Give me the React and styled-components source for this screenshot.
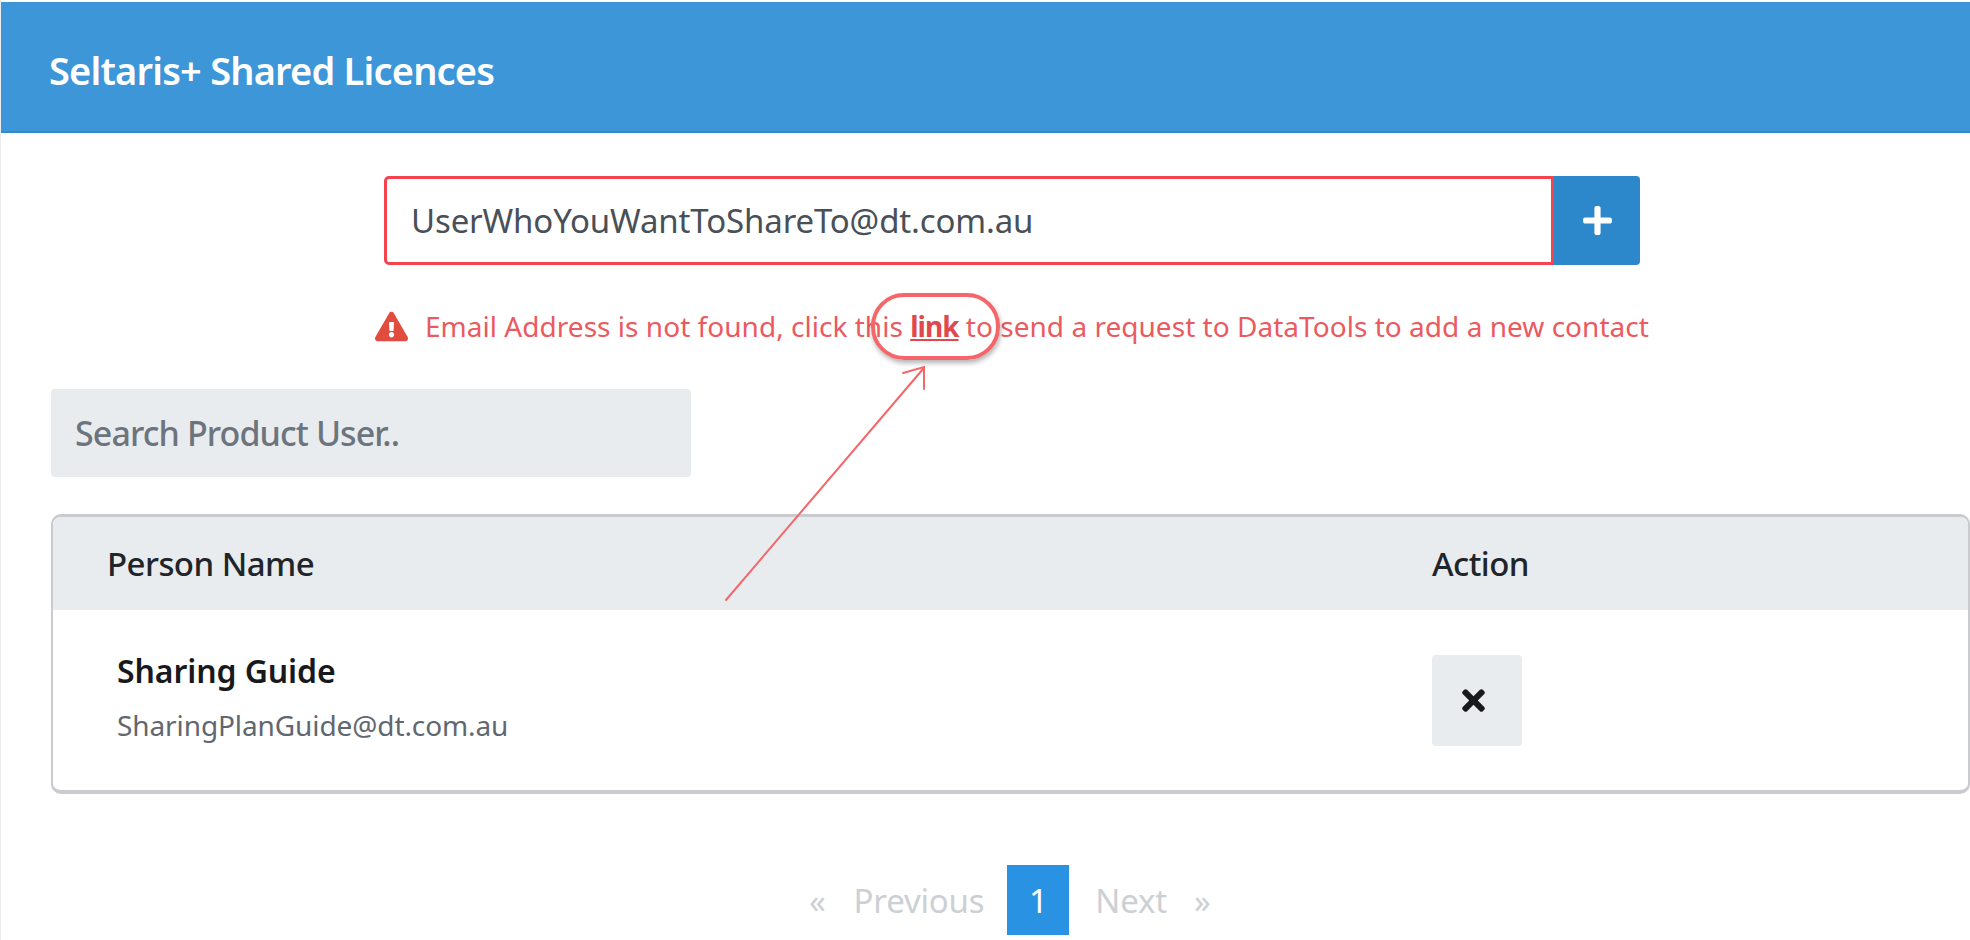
import React from "react";
import styled, { createGlobalStyle } from "styled-components";
import { FaTimes, FaPlus, FaExclamationTriangle } from "react-icons/fa";

const Global = createGlobalStyle`
  html, body { margin: 0; padding: 0; background: #fff; }
  body { font-family: "Noto Sans", "Open Sans", sans-serif; overflow: hidden; }
`;

const Page = styled.div`
  position: relative;
  width: 1970px;
  height: 940px;
  overflow: hidden;
  box-sizing: border-box;
  padding-top: 2px;
  background: #fff;
  border-left: 1px solid #ececec;
`;

const Header = styled.header`
  height: 131px;
  background: #3c96d8;
  border-bottom: 2px solid #2f8bd0;
  box-sizing: border-box;
  display: flex;
  align-items: center;
  padding: 7px 0 0 48px;
`;

const Title = styled.h1`
  margin: 0;
  color: #fff;
  font-size: 38px;
  font-weight: 600;
  letter-spacing: -0.8px;
`;

const InviteRow = styled.div`
  display: flex;
  margin: 43px 0 0 383px;
  height: 89px;
`;

const EmailInput = styled.div`
  width: 1170px;
  box-sizing: border-box;
  border: 3px solid #f4434c;
  border-radius: 5px 0 0 5px;
  display: flex;
  align-items: center;
  padding-left: 24px;
  font-size: 33px;
  letter-spacing: -0.15px;
  color: #495057;
`;

const AddButton = styled.div`
  width: 86px;
  background: #2c87cb;
  border-radius: 0 4px 4px 0;
  display: flex;
  align-items: center;
  justify-content: center;
  color: #fff;
  font-size: 33px;
`;

const ErrorRow = styled.div`
  display: flex;
  align-items: center;
  margin: 41px 0 0 374px;
  height: 40px;
  color: #ea5a5f;
  font-size: 28px;
  letter-spacing: 0.03px;
  white-space: pre;
`;

const WarnIcon = styled(FaExclamationTriangle)`
  color: #e24c3f;
  font-size: 33px;
  margin-right: 17px;
`;

const ErrorLink = styled.span`
  font-weight: 700;
  letter-spacing: -1px;
  text-decoration: underline;
  color: #e0484d;
`;

const SearchBox = styled.div`
  margin: 43px 0 0 50px;
  width: 640px;
  height: 88px;
  background: #e9ecef;
  border-radius: 4px;
  display: flex;
  align-items: center;
  padding-left: 24px;
  box-sizing: border-box;
  color: #6c757d;
  font-size: 34px;
  font-weight: 500;
  letter-spacing: -0.9px;
`;

const Table = styled.div`
  margin: 37px 0 0 50px;
  height: 280px;
  box-sizing: border-box;
  border: 2px solid #c9cbce;
  border-top-width: 3px;
  border-bottom-width: 4px;
  border-radius: 10px;
  overflow: hidden;
`;

const TableHead = styled.div`
  display: grid;
  grid-template-columns: 1379px 1fr;
  align-items: center;
  height: 93px;
  background: #e9ecef;
  color: #212529;
  font-size: 33px;
  font-weight: 500;
  letter-spacing: -0.55px;
`;

const HeadCell = styled.div`
  padding-left: ${(p) => p.$inset || 0}px;
`;

const TableRow = styled.div`
  display: grid;
  grid-template-columns: 1379px 1fr;
  align-items: center;
  height: 180px;
`;

const PersonCell = styled.div`
  padding: 0 0 9px 64px;
  display: flex;
  flex-direction: column;
  gap: 14px;
`;

const PersonName = styled.div`
  color: #17191c;
  font-size: 32px;
  font-weight: 600;
  letter-spacing: -0.1px;
  line-height: 44px;
`;

const PersonEmail = styled.div`
  color: #5f6870;
  font-size: 28px;
  letter-spacing: -0.1px;
  line-height: 36px;
`;

const RemoveButton = styled.div`
  width: 90px;
  height: 91px;
  background: #e9ecef;
  border-radius: 4px;
  display: flex;
  align-items: center;
  justify-content: center;
  color: #17191c;
  font-size: 33px;
  padding-right: 7px;
  box-sizing: border-box;
`;

const Pager = styled.nav`
  display: flex;
  align-items: center;
  margin: 71px 0 0 808px;
  height: 70px;
  color: #ccd0d4;
  font-size: 33px;
  letter-spacing: -0.2px;
`;

const PagerText = styled.span`
  margin-left: ${(p) => p.$left || 0}px;
  margin-right: ${(p) => p.$right || 0}px;
`;

const PageNumber = styled.span`
  width: 62px;
  height: 70px;
  background: #2a92e3;
  color: #fff;
  display: flex;
  align-items: center;
  justify-content: center;
`;

const LinkHalo = styled.div`
  position: absolute;
  left: 870px;
  top: 293px;
  width: 129px;
  height: 67px;
  box-sizing: border-box;
  border: 4px solid #f4666a;
  border-radius: 33px;
  box-shadow: 1px 3px 5px rgba(0, 0, 0, 0.3);
`;

const ArrowLayer = styled.svg`
  position: absolute;
  left: 0;
  top: 0;
  pointer-events: none;
`;

export default function App() {
  return (
    <>
      <Global />
      <Page>
        <Header>
          <Title>Seltaris+ Shared Licences</Title>
        </Header>
        <InviteRow>
          <EmailInput>UserWhoYouWantToShareTo@dt.com.au</EmailInput>
          <AddButton>
            <FaPlus />
          </AddButton>
        </InviteRow>
        <ErrorRow>
          <WarnIcon />
          Email Address is not found, click this <ErrorLink>link</ErrorLink> to send a request to DataTools to add a new contact
        </ErrorRow>
        <SearchBox>Search Product User..</SearchBox>
        <Table>
          <TableHead>
            <HeadCell $inset={54}>Person Name</HeadCell>
            <HeadCell>Action</HeadCell>
          </TableHead>
          <TableRow>
            <PersonCell>
              <PersonName>Sharing Guide</PersonName>
              <PersonEmail>SharingPlanGuide@dt.com.au</PersonEmail>
            </PersonCell>
            <RemoveButton>
              <FaTimes />
            </RemoveButton>
          </TableRow>
        </Table>
        <Pager>
          <PagerText $right={28}>«</PagerText>
          <PagerText $right={23}>Previous</PagerText>
          <PageNumber>1</PageNumber>
          <PagerText $left={26}>Next</PagerText>
          <PagerText $left={27}>»</PagerText>
        </Pager>
        <LinkHalo />
        <ArrowLayer width="1970" height="940" viewBox="0 0 1970 940">
          <g fill="none" stroke="#f4666a" strokeWidth="2" strokeLinecap="round">
            <path d="M725 600 L922 369" />
            <path d="M902 373 L923 367 L923 389" />
          </g>
        </ArrowLayer>
      </Page>
    </>
  );
}
